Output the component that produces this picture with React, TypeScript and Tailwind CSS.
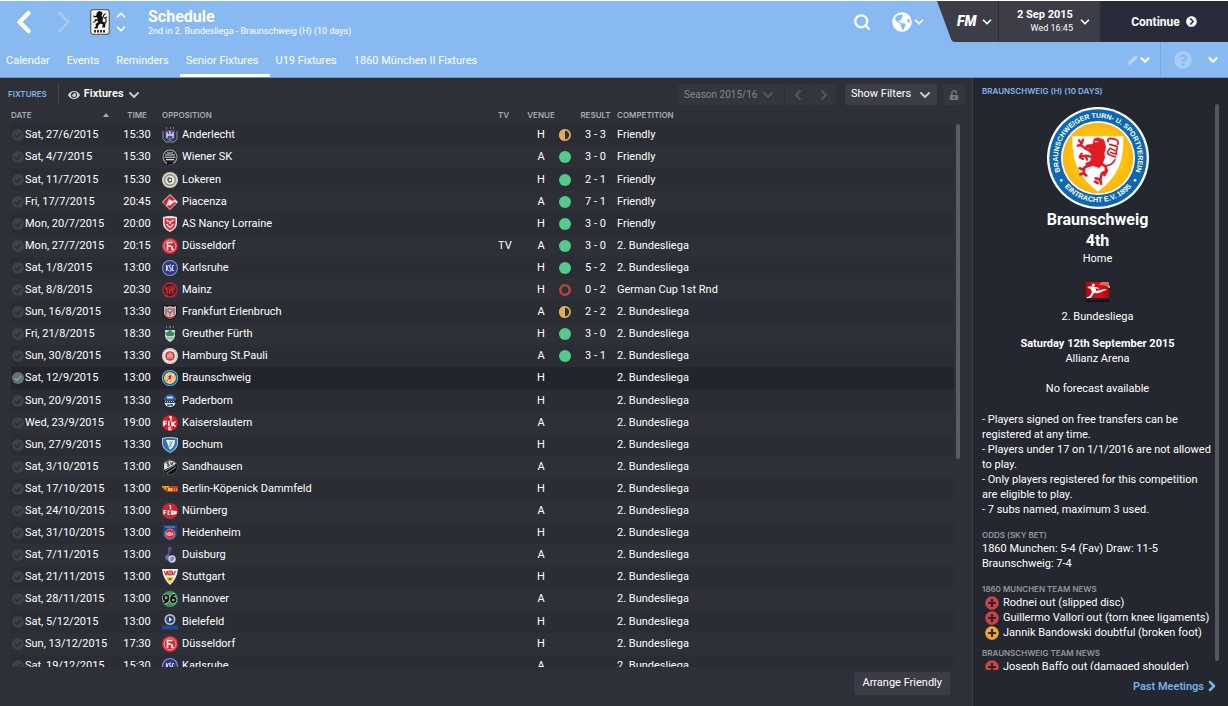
import type { ReactNode } from 'react';
import { ChevronDown, ChevronLeft, ChevronRight, ChevronUp, Pencil, Search } from 'lucide-react';
import { FaChevronCircleRight, FaEye, FaGlobeAmericas, FaPlusCircle, FaQuestionCircle, FaUnlockAlt } from 'react-icons/fa';
import { clsx } from 'clsx';

type Outcome = 'win' | 'draw' | 'loss';

interface Fixture {
  date: string;
  time: string;
  team: string;
  venue: 'H' | 'A';
  competition: string;
  tv?: boolean;
  outcome?: Outcome;
  result?: string;
}

const LEAGUE = '2. Bundesliega';

const fixtures: Fixture[] = [
  { date: 'Sat, 27/6/2015', time: '15:30', team: 'Anderlecht', venue: 'H', outcome: 'draw', result: '3 - 3', competition: 'Friendly' },
  { date: 'Sat, 4/7/2015', time: '15:30', team: 'Wiener SK', venue: 'A', outcome: 'win', result: '3 - 0', competition: 'Friendly' },
  { date: 'Sat, 11/7/2015', time: '15:30', team: 'Lokeren', venue: 'H', outcome: 'win', result: '2 - 1', competition: 'Friendly' },
  { date: 'Fri, 17/7/2015', time: '20:45', team: 'Piacenza', venue: 'A', outcome: 'win', result: '7 - 1', competition: 'Friendly' },
  { date: 'Mon, 20/7/2015', time: '20:00', team: 'AS Nancy Lorraine', venue: 'H', outcome: 'win', result: '3 - 0', competition: 'Friendly' },
  { date: 'Mon, 27/7/2015', time: '20:15', team: 'Düsseldorf', tv: true, venue: 'A', outcome: 'win', result: '3 - 0', competition: LEAGUE },
  { date: 'Sat, 1/8/2015', time: '13:00', team: 'Karlsruhe', venue: 'H', outcome: 'win', result: '5 - 2', competition: LEAGUE },
  { date: 'Sat, 8/8/2015', time: '20:30', team: 'Mainz', venue: 'H', outcome: 'loss', result: '0 - 2', competition: 'German Cup 1st Rnd' },
  { date: 'Sun, 16/8/2015', time: '13:30', team: 'Frankfurt Erlenbruch', venue: 'A', outcome: 'draw', result: '2 - 2', competition: LEAGUE },
  { date: 'Fri, 21/8/2015', time: '18:30', team: 'Greuther Fürth', venue: 'H', outcome: 'win', result: '3 - 0', competition: LEAGUE },
  { date: 'Sun, 30/8/2015', time: '13:30', team: 'Hamburg St.Pauli', venue: 'A', outcome: 'win', result: '3 - 1', competition: LEAGUE },
  { date: 'Sat, 12/9/2015', time: '13:00', team: 'Braunschweig', venue: 'H', competition: LEAGUE },
  { date: 'Sun, 20/9/2015', time: '13:30', team: 'Paderborn', venue: 'H', competition: LEAGUE },
  { date: 'Wed, 23/9/2015', time: '19:00', team: 'Kaiserslautern', venue: 'A', competition: LEAGUE },
  { date: 'Sun, 27/9/2015', time: '13:30', team: 'Bochum', venue: 'H', competition: LEAGUE },
  { date: 'Sat, 3/10/2015', time: '13:00', team: 'Sandhausen', venue: 'A', competition: LEAGUE },
  { date: 'Sat, 17/10/2015', time: '13:00', team: 'Berlin-Köpenick Dammfeld', venue: 'H', competition: LEAGUE },
  { date: 'Sat, 24/10/2015', time: '13:00', team: 'Nürnberg', venue: 'A', competition: LEAGUE },
  { date: 'Sat, 31/10/2015', time: '13:00', team: 'Heidenheim', venue: 'H', competition: LEAGUE },
  { date: 'Sat, 7/11/2015', time: '13:00', team: 'Duisburg', venue: 'A', competition: LEAGUE },
  { date: 'Sat, 21/11/2015', time: '13:00', team: 'Stuttgart', venue: 'H', competition: LEAGUE },
  { date: 'Sat, 28/11/2015', time: '13:00', team: 'Hannover', venue: 'A', competition: LEAGUE },
  { date: 'Sat, 5/12/2015', time: '13:00', team: 'Bielefeld', venue: 'H', competition: LEAGUE },
  { date: 'Sun, 13/12/2015', time: '17:30', team: 'Düsseldorf', venue: 'H', competition: LEAGUE },
  { date: 'Sat, 19/12/2015', time: '15:30', team: 'Karlsruhe', venue: 'A', competition: LEAGUE },
];

const tabs = ['Calendar', 'Events', 'Reminders', 'Senior Fixtures', 'U19 Fixtures', '1860 München II Fixtures'];

// Club crests, all on a 16x16 grid
const crests: Record<string, ReactNode> = {
  Anderlecht: (
    <>
      <path d="M1 4v8l3 3h8l3-3V4" fill="none" stroke="#8f8f9c" />
      <path d="M3 3h10v9l-5 3-5-3z" fill="#4f4590" />
      <path d="M5 5v6M11 5v6M5 8h6M8 4v3" stroke="#dcdcec" strokeWidth="1.3" />
      <path d="M4 1h1M8 1h1M11 1h1" stroke="#c28a4a" strokeWidth="1.5" />
      <path d="M7 11h2v3H7z" fill="#2f9a5b" />
    </>
  ),
  'Wiener SK': (
    <>
      <circle cx="8" cy="8" r="7.5" fill="#a9aaab" />
      <circle cx="8" cy="8" r="6.5" fill="#26282a" />
      <path d="M3 6h10M2.500 8.300h11M4 10.600h8M5 4h6" stroke="#d8d8d8" strokeWidth="1.1" />
      <path d="M5 12.500h6v3H5z" fill="#111" />
    </>
  ),
  Lokeren: (
    <>
      <circle cx="8" cy="8" r="8" fill="#d3d1bd" />
      <circle cx="8" cy="8" r="6" fill="#8f8f84" />
      <circle cx="8" cy="8" r="4.600" fill="#e8e6d6" />
      <path d="M6 5l4 1v4l-3 1-2-3z" fill="#5f6062" />
      <path d="M7 7h2v2H7z" fill="#ece9dc" />
    </>
  ),
  Piacenza: (
    <>
      <path d="M8 0l8 8-8 8-8-8z" fill="#eccfd3" />
      <path d="M8 1l5 5-4 1-2-2-2 4-1 3-3-4z" fill="#d3202f" />
      <path d="M8 15l-3-3 3-1 5-3 1 1z" fill="#d3202f" />
      <path d="M7 5l3 2-1 5-2-3z" fill="#fff" />
    </>
  ),
  'AS Nancy Lorraine': (
    <>
      <path d="M1 1q7-2 14 0v6q0 6-7 9-7-3-7-9z" fill="#e8e1e1" />
      <path d="M2.500 2.200h11V7q0 5-5.500 7.500Q2.500 12 2.500 7z" fill="#d9333d" />
      <path d="M4.500 4l2 1.500M11.500 4l-2 1.500M4.800 8q3.200 6 6.400 0M8 5v3" fill="none" stroke="#fff" strokeWidth="1.3" />
    </>
  ),
  Düsseldorf: (
    <>
      <circle cx="8" cy="8" r="8" fill="#dd2533" />
      <circle cx="8" cy="8" r="6" fill="none" stroke="#f6b9be" strokeWidth=".8" />
      <path d="M5.500 12V4.500h5M5.500 8H9M10 8v3.500h2" fill="none" stroke="#fff" strokeWidth="1.6" />
    </>
  ),
  Karlsruhe: (
    <>
      <circle cx="8" cy="8" r="8" fill="#8d93c6" />
      <circle cx="8" cy="8" r="7" fill="#2c3a8c" />
      <path d="M4.500 5v6M6.500 5L5 8l1.500 3M9 5H7.800v3H9v3H7.500M12 5.500h-1.500v5H12" fill="none" stroke="#e4e6f3" strokeWidth="1" />
    </>
  ),
  Mainz: (
    <>
      <circle cx="8" cy="8" r="7" fill="#3b2129" stroke="#c4222f" strokeWidth="1.400" />
      <path d="M5 12V5M7.500 12V4M10 9V4M5 8q-2-1-1-3M7.500 8H11q2-1 1-4M10 9q0 3 2 1M3 14h3M10 14h3" fill="none" stroke="#cf2430" strokeWidth="1.500" />
    </>
  ),
  'Frankfurt Erlenbruch': (
    <>
      <path d="M1 1h14v10q-2 4-7 5-5-1-7-5z" fill="#15161b" />
      <path d="M2 2l3 1 3-1 3 1 3-1v8q-2 4-6 5-4-1-6-5z" fill="#c9bcc0" />
      <path d="M4 4v7M12 4v7M6 5h4v3H6zM8 8v4" stroke="#8e3a42" fill="#e8dcde" />
      <path d="M3 12q5 4 10 0" stroke="#b32d35" strokeWidth="1.500" fill="none" />
    </>
  ),
  'Greuther Fürth': (
    <>
      <path d="M4 1h1M8 0v2M11 1h1" stroke="#8d8f90" strokeWidth="1.300" />
      <path d="M3 4h10v6q-1 4-5 6-4-2-5-6z" fill="#c5d8cc" />
      <path d="M8 3l2 3 3 1-2 3H5L3 7l3-1z" fill="#2b8d51" />
      <path d="M5 12h6" stroke="#5eaa7c" />
    </>
  ),
  'Hamburg St.Pauli': (
    <>
      <circle cx="8" cy="8" r="8" fill="#eee9e5" />
      <circle cx="8" cy="8" r="7" fill="none" stroke="#a77b70" strokeWidth=".8" strokeDasharray="1 1" />
      <circle cx="8" cy="8" r="4.800" fill="#d4373f" />
      <path d="M6 11V6h4v5M8 4v7M5 8h6" fill="none" stroke="#f5c5c2" strokeWidth=".9" />
    </>
  ),
  Paderborn: (
    <>
      <circle cx="8" cy="8" r="6" fill="#e6eaf0" />
      <path d="M2 7a6 6 0 0 1 12 0z" fill="#2a5a9b" />
      <path d="M5 3.500h6v2H5z" fill="#cfdcee" />
      <path d="M0 7.200h16v2.600H0z" fill="#202226" />
      <path d="M3 8.500h10" stroke="#c7cbd2" strokeDasharray="1 1" />
      <path d="M5 11h6v2H5z" fill="#3e78bd" />
    </>
  ),
  Kaiserslautern: (
    <>
      <circle cx="8" cy="8" r="8" fill="#e01a25" />
      <path d="M7 2h2v4M2 11V6.500h3M2 8.700h2.500M6.800 6v5M10 6.500v5M13.500 6.500L10.500 9l3.300 2.500M9 12.500H7v2h2.500" fill="none" stroke="#fff" strokeWidth="1.500" />
    </>
  ),
  Bochum: (
    <>
      <path d="M0 1q8-2 16 0v6q-1 6-8 9Q1 13 0 7z" fill="#a9c9e6" />
      <path d="M1 2q7-2 14 0v5q-1 5-7 8-6-3-7-8z" fill="#2c73ba" />
      <path d="M4 3h9q0 6-5 10z" fill="#f3f7fb" />
      <path d="M8 4v6M10.500 4L8 10" stroke="#5d97cf" />
    </>
  ),
  Sandhausen: (
    <>
      <circle cx="8" cy="8" r="7.500" fill="#0f1012" stroke="#6b6d70" strokeWidth=".6" />
      <path d="M2 5a7 7 0 0 1 12 0L2 11z" fill="#d9dadb" />
      <path d="M7 3H5v2h2v2H5M8.500 3l1.300 3L11 3" fill="none" stroke="#2b2c2f" />
      <path d="M3 12l10-6M5 14l9-6" stroke="#a9abae" strokeWidth=".8" />
    </>
  ),
  'Berlin-Köpenick Dammfeld': (
    <>
      <path d="M0 5h16v6H5L0 7z" fill="#b8441f" />
      <path d="M0 5h7v1.500H4V9H2.500V6.500H0z" fill="#e7a524" />
      <path d="M6 7h4v3H6z" fill="#e9bd27" />
      <path d="M10.500 7v3M12.500 7v3M14.500 7v3" stroke="#e5813d" />
    </>
  ),
  Nürnberg: (
    <>
      <circle cx="8" cy="8" r="8" fill="#d8202e" />
      <path d="M7 2.500h1.500v4M2 11.500V7.500h2.500M2 9.500h2M7.800 8h-1.600v3.500h1.600M9.500 8h1.500v3.500H9.500zM12.500 11.500V8l1.500 3V8" fill="none" stroke="#fff" strokeWidth="1.200" />
    </>
  ),
  Heidenheim: (
    <>
      <path d="M1 0h14v10q-1 4-7 6-6-2-7-6z" fill="#1d4684" />
      <path d="M3 2h10" stroke="#7f9ac4" />
      <circle cx="8" cy="9" r="5" fill="#de2633" stroke="#d7dbe5" strokeWidth=".5" />
      <path d="M5 7.500v3M6.800 7.500h1.500v3H6.800zM10 7.500v3M10 9h1.300" fill="none" stroke="#fff" strokeWidth=".9" />
    </>
  ),
  Duisburg: (
    <>
      <path d="M6 0h4l-1 4-2 3-1 4H4l2-5z" fill="#4b5196" />
      <path d="M3 9l4-2 1 3-4 4z" fill="#686fae" />
      <circle cx="10" cy="12" r="3.800" fill="#c7cae8" />
      <path d="M9 10h3v2l-2 2H8z" fill="#7c82bf" />
    </>
  ),
  Stuttgart: (
    <>
      <path d="M0 0h16q-1 10-8 16Q1 10 0 0z" fill="#f3efe9" />
      <path d="M2 2l2 4 1-4 1 4M7 6V2h2v4H7zM10.500 2v4M13.500 2l-2 4" fill="none" stroke="#cf3139" strokeWidth="1.200" />
      <path d="M4 8h8q-1 4-4 6-3-2-4-6z" fill="#e5cf37" />
      <path d="M6 9.500h4l-1 1.500H7z" fill="#5a5017" />
    </>
  ),
  Hannover: (
    <>
      <circle cx="8" cy="8" r="8" fill="#3a9858" />
      <path d="M6.500 7.500a2.500 2.500 0 1 1 0-1.500c0 3-1 5-4.500 6M13.500 3.500c-3 .5-4.500 3-4.500 5.500a2.300 2.300 0 1 0 .4-1.400" fill="none" stroke="#f1f4f2" strokeWidth="3" />
      <path d="M6.500 7.500a2.500 2.500 0 1 1 0-1.500c0 3-1 5-4.500 6M13.500 3.500c-3 .5-4.500 3-4.500 5.500a2.300 2.300 0 1 0 .4-1.400" fill="none" stroke="#141615" strokeWidth="2.200" />
    </>
  ),
  Bielefeld: (
    <>
      <circle cx="8" cy="5.500" r="5.500" fill="#aebcd3" />
      <circle cx="8" cy="5.500" r="3.800" fill="#24406f" />
      <path d="M7 3l3 2.500L7 8z" fill="#f3f5f8" />
      <path d="M0 11.500h16v4H0z" fill="#1f4a94" />
    </>
  ),
};

const RedLion = () => (
  <g fill="none" stroke="#e31b23" strokeLinecap="round" strokeLinejoin="round">
    <path d="M142 96l10-4 8 3 10 3 4 12 2 14-5 14 2 14-8 20-8 10-18-6-18 4-6-10 16-8 4-18-10-12 2-8-14-2 6-8 18-2z" fill="#e31b23" strokeWidth="2" />
    <path d="M130 132l-16-8-12-10M96 100l8 10 4-12M102 114l-10 2M138 150l-22-4-16 4M104 140l-6 10 10 6M116 148l4 10" strokeWidth="7" />
    <path d="M130 172l-18 10-2 16M98 184l12 4M110 198l-10 4M110 198l8 8" strokeWidth="8" />
    <path d="M158 168l18 10 2 14-14 8-4 18M180 190l-8 14M160 218l-14-4M160 218l2 12M152 228l-8-4" strokeWidth="8" />
    <path d="M172 176q22 2 32-18M206 150l-18-6q-12-6-2-16M184 104q-6-8 6-10l18 4q8 4 4 14M188 112l22 6v10M188 124l20 8v10M190 136l16 6" strokeWidth="5" />
    <path d="M144 104h8" stroke="#fff" strokeWidth="3" />
  </g>
);

const BraunschweigCrest = ({ className, lettering = false }: { className?: string; lettering?: boolean }) => (
  <svg viewBox="0 0 306 306" className={className} role="img" aria-label="Braunschweig">
    <defs>
      <radialGradient id="gold">
        <stop offset="0" stopColor="#ffe11a" />
        <stop offset="1" stopColor="#fbb50f" />
      </radialGradient>
      <path id="ringTop" d="M44 203a120 120 0 1 1 218 0" />
      <path id="ringBottom" d="M35 213a132 132 0 0 0 236 0" />
    </defs>
    <circle cx="153" cy="153" r="153" fill="#fff" />
    <circle cx="153" cy="153" r="146" fill="#0d68ad" />
    <circle cx="153" cy="153" r="111" fill="#fff" />
    <circle cx="153" cy="153" r="106" fill="url(#gold)" />
    <path d="M76 88h153q2 70-22 108-18 32-54 58-36-26-54-58-25-38-23-108z" fill="#fff" />
    <RedLion />
    {lettering && (
      <g fill="#fff" fontFamily="'Liberation Sans Narrow', 'Liberation Sans', sans-serif" fontWeight="700" textAnchor="middle">
        <text fontSize="21">
          <textPath href="#ringTop" startOffset="50%">BRAUNSCHWEIGER TURN- U. SPORTVEREIN</textPath>
        </text>
        <text fontSize="22">
          <textPath href="#ringBottom" startOffset="50%">EINTRACHT E.V. 1895</textPath>
        </text>
        <circle cx="43" cy="220" r="4" />
        <circle cx="264" cy="220" r="4" />
      </g>
    )}
  </svg>
);

const Crest = ({ team }: { team: string }) =>
  team === 'Braunschweig' ? (
    <BraunschweigCrest className="size-4 shrink-0" />
  ) : (
    <svg viewBox="0 0 16 16" className="size-4 shrink-0" aria-hidden="true">
      {crests[team]}
    </svg>
  );

const MunichCrest = () => (
  <svg viewBox="0 0 20 26" className="h-[26px] w-5" role="img" aria-label="1860 München">
    <rect x=".7" y=".7" width="18.600" height="24.600" rx="2.500" fill="#f4f4f4" stroke="#6d6659" strokeWidth="1.300" />
    <path d="M7 3.500l2-1.500 3 1 .5 2-1 1.500 1.500 2.500-.5 3.500 3 1.500-.5 4.500H12l1-3-2.500-1-2 1.500-1 3.500H4l2-2.500-.5-2 3-2-1.500-1.500-3.500 1L3 14l3-1.500L4 11l2-1 2 .5L6.500 8 4 8.500 3 6.500l3 .5z" fill="#111" />
    <path d="M14 14.500q3.500-2 1.500-5-3-1-2-3l2-2M15 9l2-1" fill="none" stroke="#222" strokeWidth="1.200" />
    <path d="M4 22.300h12" stroke="#333" strokeWidth="2.400" strokeDasharray="2 1" />
  </svg>
);

const BundesligaLogo = () => (
  <svg viewBox="0 0 75 63" className="h-[21px] w-[25px]" role="img" aria-label="Bundesliga">
    <defs>
      <linearGradient id="cup" x1="0" y1="0" x2="1" y2="0">
        <stop offset="0" stopColor="#a70a10" />
        <stop offset=".6" stopColor="#e01018" />
        <stop offset="1" stopColor="#a50a0f" />
      </linearGradient>
    </defs>
    <path d="M2 0h70v48H2z" fill="url(#cup)" />
    <path d="M50 0h22v16q-14-8-30-8z" fill="#f6a48c" opacity=".6" />
    <circle cx="25" cy="9" r="4.500" fill="#fff" />
    <path d="M8 14l14-1 10 2 10 3-1 3-10-2 3 8 28-7 3 3-26 11-12-1-9 14-12 2-1-3 9-3 7-12-4-11-9-2z" fill="#fff" />
    <circle cx="72" cy="14" r="4" fill="#aaa" />
    <path d="M3 57h68" stroke="#0d0e11" strokeWidth="8" strokeDasharray="5 2" />
  </svg>
);

const OutcomeIcon = ({ outcome }: { outcome: Outcome }) => (
  <svg viewBox="0 0 12 12" className="size-3" role="img" aria-label={outcome}>
    {outcome === 'win' && <circle cx="6" cy="6" r="6" fill="#56c98e" />}
    {outcome === 'loss' && <circle cx="6" cy="6" r="4.700" fill="none" stroke="#b5443f" strokeWidth="2.600" />}
    {outcome === 'draw' && (
      <>
        <circle cx="6" cy="6" r="5.100" fill="#2b2d33" stroke="#e0ac55" strokeWidth="1.800" />
        <path d="M6 0a6 6 0 0 0 0 12z" fill="#e0ac55" />
      </>
    )}
  </svg>
);

const CheckBadge = ({ active }: { active: boolean }) => (
  <svg viewBox="0 0 12 12" className="size-3 shrink-0" aria-hidden="true">
    <circle cx="6" cy="6" r="6" fill={active ? '#6c6e73' : '#3e4147'} />
    <path d="M2.800 6.300l2.200 2L9.200 4" fill="none" stroke={active ? '#45c488' : '#2a2d33'} strokeWidth="1.500" />
  </svg>
);

const SectionLabel = ({ children, className }: { children: ReactNode; className?: string }) => (
  <h3 className={clsx("font-['Inter',sans-serif] text-[8px] leading-[11px] font-semibold uppercase", className)}>{children}</h3>
);

const Header = () => (
  <header className="border-t border-white bg-[#88baf1] text-white">
    <div className="flex h-[41px] items-center">
      <div className="flex flex-1 items-center pl-1.5">
        <button type="button" aria-label="Back">
          <ChevronLeft className="size-9" strokeWidth={3} />
        </button>
        <button type="button" aria-label="Forward" className="ml-1 text-[#a3c9f4]">
          <ChevronRight className="size-9" strokeWidth={2} />
        </button>
        <div className="ml-2">
          <MunichCrest />
        </div>
        <div className="ml-1 flex flex-col">
          <button type="button" aria-label="Previous club"><ChevronUp className="size-3.5" strokeWidth={3} /></button>
          <button type="button" aria-label="Next club"><ChevronDown className="size-3.5" strokeWidth={3} /></button>
        </div>
        <div className="ml-5 pt-1">
          <h1 className="text-[16px] leading-[16px] font-bold">Schedule</h1>
          <p className="text-[9px] leading-[13px]">2nd in 2. Bundesliega - Braunschweig (H) (10 days)</p>
        </div>
      </div>
      <button type="button" aria-label="Search" className="mr-[21px]">
        <Search className="size-[18px]" strokeWidth={3} />
      </button>
      <button type="button" aria-label="World" className="mr-[11px] flex items-center">
        <FaGlobeAmericas className="size-5" />
        <ChevronDown className="size-3.5" strokeWidth={3} />
      </button>
      <div className="flex h-full self-stretch">
        <svg viewBox="0 0 18 41" className="h-full w-[18px]" aria-hidden="true">
          <path d="M0 0h18v41q-3 0-4-3z" fill="#3d3d48" />
        </svg>
        <button type="button" className="flex w-11 items-center justify-between border-r border-[#2d2e36] bg-[#3d3d48] pr-1 pl-0.5">
          <span className="text-[14px] font-black italic">FM</span>
          <ChevronDown className="size-3.5" strokeWidth={3} />
        </button>
        <button type="button" className="flex w-[101px] items-center justify-between bg-[#3d3d48] pr-2 pl-[18px]">
          <span className="text-right">
            <span className="block text-[11px] leading-[14px] font-bold">2 Sep 2015</span>
            <span className="block text-[9px] leading-[13px]">Wed 16:45</span>
          </span>
          <ChevronDown className="size-3.5" strokeWidth={3} />
        </button>
        <button type="button" className="flex w-32 items-center justify-center gap-1.5 bg-[#282c3a] text-[12px] font-bold">
          Continue
          <FaChevronCircleRight className="size-[11px]" />
        </button>
      </div>
    </div>
    <div className="flex h-9 border-b border-[#6c93c8]">
      <nav className="flex flex-1 text-[11px]">
        {tabs.map((tab) => (
          <a
            key={tab}
            href="#"
            className={clsx(
              'flex items-center border-b-[3px] pt-1.5 pr-[11px] pl-1.5',
              tab === 'Senior Fixtures' ? 'border-b-white' : 'border-b-transparent',
            )}
          >
            {tab}
          </a>
        ))}
      </nav>
      <button type="button" aria-label="Edit" className="mr-2 flex items-center">
        <Pencil className="size-[10px] text-[#b4d4f7]" strokeWidth={3} fill="currentColor" />
        <ChevronDown className="size-3.5" strokeWidth={4} />
      </button>
      <button type="button" aria-label="Help" className="flex w-11 items-center justify-center border-l border-[#78a9e2]">
        <FaQuestionCircle className="size-[18px] text-[#a9cdf6]" />
      </button>
      <button type="button" aria-label="More" className="ml-0.5 mr-2 flex items-center">
        <ChevronDown className="size-3.5" strokeWidth={4} />
      </button>
    </div>
  </header>
);

const Toolbar = () => (
  <div className="flex h-[31px] items-center pt-0.5 pr-[7px]">
    <SectionLabel className="pr-[11px] pl-2 text-[#83b2ea]">Fixtures</SectionLabel>
    <label className="flex h-[21px] items-center border-l border-[#43464d] pl-[9px] text-[11px] font-semibold text-white">
      <FaEye className="mr-1 size-3 text-[#d0d1d3]" />
      <select aria-label="View" className="appearance-none bg-transparent pr-0.5 outline-none">
        <option>Fixtures</option>
      </select>
      <ChevronDown className="size-4 text-[#c8c9cc]" strokeWidth={3} />
    </label>
    <div className="flex-1" />
    <div className="flex h-[21px] overflow-hidden rounded-xs bg-[#33363d] text-[#55585f]">
      <label className="flex w-[107px] items-center justify-between border-r border-[#2d3037] pr-2 pl-1.5">
        <select aria-label="Season" className="appearance-none bg-transparent text-[10px] text-[#85878c] outline-none">
          <option>Season 2015/16</option>
        </select>
        <ChevronDown className="size-4" strokeWidth={3} />
      </label>
      <button type="button" aria-label="Previous season" className="flex w-[26px] items-center justify-center border-r border-[#2d3037]">
        <ChevronLeft className="size-4" strokeWidth={3} />
      </button>
      <button type="button" aria-label="Next season" className="flex w-[25px] items-center justify-center">
        <ChevronRight className="size-4" strokeWidth={3} />
      </button>
    </div>
    <button type="button" className="ml-[9px] flex h-[21px] w-[92px] items-center justify-between rounded-xs bg-[#3d3d48] pr-1 pl-1.5 text-[11px] text-white">
      Show Filters
      <ChevronDown className="size-4 text-[#c8c9cc]" strokeWidth={3} />
    </button>
    <button type="button" aria-label="Lock filters" className="ml-1.5 flex h-[21px] w-[22px] items-center justify-center rounded-xs bg-[#33363d] text-[#74777d]">
      <FaUnlockAlt className="size-[10px]" />
    </button>
  </div>
);

const FixturesTable = () => (
  <div className="flex min-h-0 flex-1 pr-3 pl-[11px]">
    <div className="min-h-0 flex-1 overflow-hidden">
      <table className="w-full table-fixed border-collapse text-[11px] leading-[14px] text-white">
        <colgroup>
          <col className="w-[102px]" />
          <col className="w-12" />
          <col className="w-[337px]" />
          <col className="w-7" />
          <col className="w-[30px]" />
          <col className="w-[18px]" />
          <col className="w-[43px]" />
          <col />
        </colgroup>
        <thead>
          <tr className="h-[15px] border-b border-[#26292f] text-left align-top font-['Inter',sans-serif] text-[8px] leading-[12px] text-[#a9abae] uppercase [&>th]:p-0 [&>th]:font-semibold">
            <th>
              <span className="flex items-center justify-between pr-1">
                Date
                <svg viewBox="0 0 6 4" className="h-1 w-1.5" aria-hidden="true">
                  <path d="M3 0l3 4H0z" fill="#a9abae" />
                </svg>
              </span>
            </th>
            <th className="text-center">Time</th>
            <th>
              <span className="pl-px">Opposition</span>
            </th>
            <th>TV</th>
            <th className="text-center">Venue</th>
            <th />
            <th className="text-center">Result</th>
            <th>Competition</th>
          </tr>
        </thead>
        <tbody>
          {fixtures.map((f) => {
            const next = f.team === 'Braunschweig';
            return (
              <tr
                key={f.date}
                className={clsx('h-[22px] [&:nth-child(10n+3)]:h-[23px] [&>td]:p-0', next ? 'bg-[#23252c]' : 'odd:bg-[#2a2d33]')}
              >
                <td>
                  <span className="flex items-center gap-px pl-px whitespace-nowrap">
                    <CheckBadge active={next} />
                    {f.date}
                  </span>
                </td>
                <td className="text-center">{f.time}</td>
                <td>
                  <span className="flex items-center gap-1 pl-px">
                    <Crest team={f.team} />
                    {f.team}
                  </span>
                </td>
                <td>{f.tv && 'TV'}</td>
                <td className="text-center">{f.venue}</td>
                <td>
                  <span className="flex justify-center">{f.outcome && <OutcomeIcon outcome={f.outcome} />}</span>
                </td>
                <td className="text-center">{f.result}</td>
                <td>{f.competition}</td>
              </tr>
            );
          })}
        </tbody>
      </table>
    </div>
    <div className="mt-[15px] ml-0.5 h-3/5 w-1 rounded-full bg-[#5b5d63]" />
  </div>
);

const news = [
  { text: 'Rodnei out (slipped disc)', color: 'text-[#cf4144]' },
  { text: 'Guillermo Vallorí out (torn knee ligaments)', color: 'text-[#cf4144]' },
  { text: 'Jannik Bandowski doubtful (broken foot)', color: 'text-[#f6a623]' },
];

const NewsItem = ({ text, color }: { text: string; color: string }) => (
  <li className="flex items-center gap-1 pl-[3px] whitespace-nowrap">
    <FaPlusCircle className={clsx('size-[14px] shrink-0', color)} />
    {text}
  </li>
);

const MatchPanel = () => (
  <aside className="flex min-h-0 w-64 shrink-0 flex-col border-l border-[#3a3e46] bg-[#24272f] pl-[9px] text-[11px] leading-[15px] text-white">
    <SectionLabel className="pt-2 pb-[7px] text-[#83b2ea]">Braunschweig (H) (10 days)</SectionLabel>
    <div className="flex min-h-0 flex-1">
      <div className="min-h-0 flex-1 overflow-hidden pt-[3px]">
        <div className="flex flex-col items-center text-center">
          <BraunschweigCrest className="size-[102px]" lettering />
          <h2 className="text-[16px] leading-[21px] font-bold">Braunschweig</h2>
          <p className="text-[16px] leading-[21px] font-bold">4th</p>
          <p>Home</p>
          <div className="mt-4">
            <BundesligaLogo />
          </div>
          <p className="mt-1.5">2. Bundesliega</p>
          <p className="mt-3 font-bold">Saturday 12th September 2015</p>
          <p>Allianz Arena</p>
          <p className="mt-[15px]">No forecast available</p>
        </div>
        <div className="mt-4">
          <p>- Players signed on free transfers can be registered at any time.</p>
          <p>- Players under 17 on 1/1/2016 are not allowed to play.</p>
          <p>- Only players registered for this competition are eligible to play.</p>
          <p>- 7 subs named, maximum 3 used.</p>
        </div>
        <SectionLabel className="mt-[13px] text-[#94969a]">Odds (Sky Bet)</SectionLabel>
        <p>1860 Munchen: 5-4 (Fav) Draw: 11-5 Braunschweig: 7-4</p>
        <SectionLabel className="mt-[13px] text-[#94969a]">1860 Munchen Team News</SectionLabel>
        <ul>
          {news.map((n) => (
            <NewsItem key={n.text} {...n} />
          ))}
        </ul>
        <SectionLabel className="mt-2 text-[#94969a]">Braunschweig Team News</SectionLabel>
        <ul>
          <NewsItem text="Joseph Baffo out (damaged shoulder)" color="text-[#cf4144]" />
        </ul>
      </div>
      <div className="mr-[9px] mb-[9px] ml-0.5 w-1 rounded-full bg-[#55575d]" />
    </div>
    <div className="flex h-9 justify-end pt-2 pr-2">
      <a href="#" className="flex h-4 items-center text-[11px] font-semibold text-[#75b0e8]">
        Past Meetings
        <ChevronRight className="size-4" strokeWidth={4} />
      </a>
    </div>
  </aside>
);

export default function App() {
  return (
    <div className="flex h-screen flex-col overflow-hidden bg-[#2d3037] font-['Roboto','Liberation_Sans',sans-serif]">
      <Header />
      <div className="flex min-h-0 flex-1">
        <main className="flex min-h-0 min-w-0 flex-1 flex-col">
          <Toolbar />
          <FixturesTable />
          <div className="flex h-[39px] justify-end pt-[5px] pr-[22px]">
            <button type="button" className="h-[23px] rounded-xs bg-[#3b3c46] px-2 text-[11px] text-white">
              Arrange Friendly
            </button>
          </div>
        </main>
        <MatchPanel />
      </div>
    </div>
  );
}
